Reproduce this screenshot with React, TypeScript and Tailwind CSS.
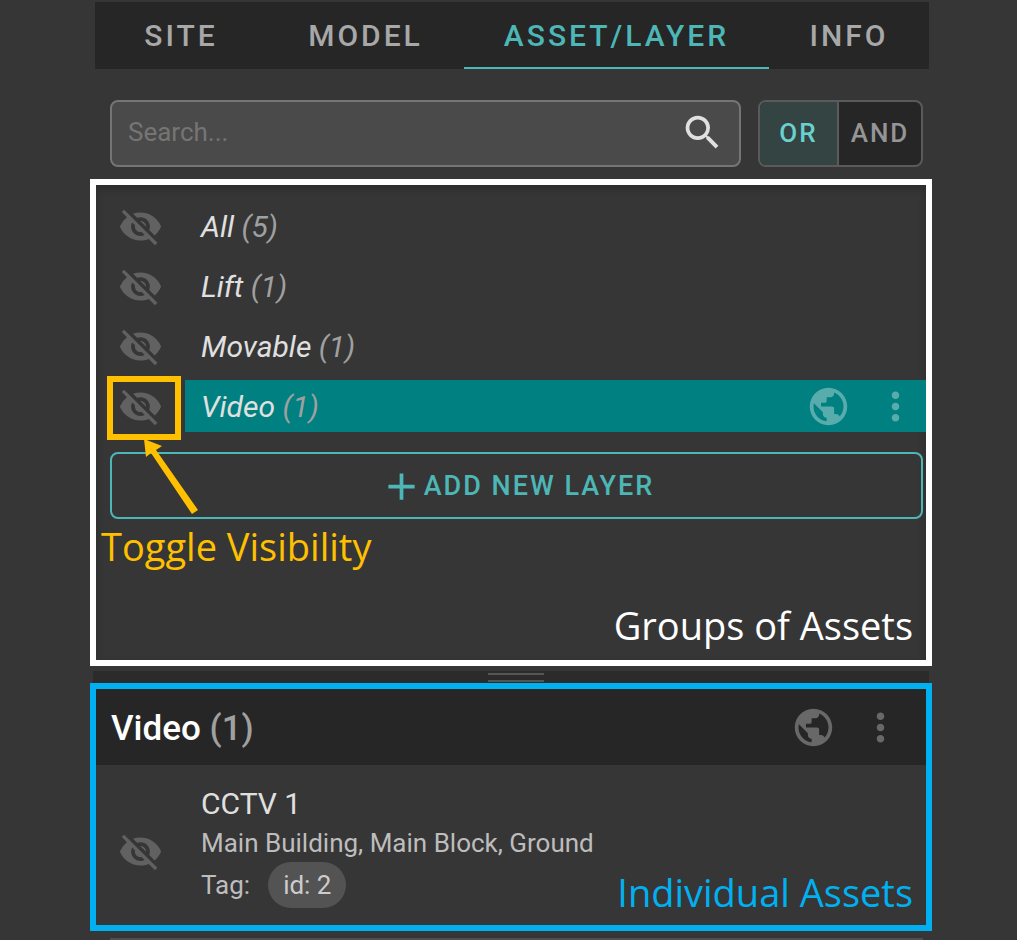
import { useState } from "react";
import {
  MdAdd,
  MdMoreVert,
  MdPublic,
  MdSearch,
  MdVisibilityOff,
} from "react-icons/md";

const tabs = ["SITE", "MODEL", "ASSET/LAYER", "INFO"];

const groups = [
  { name: "All", count: 5 },
  { name: "Lift", count: 1 },
  { name: "Movable", count: 1 },
  { name: "Video", count: 1 },
];

function VisibilityButton({ label }: { label: string }) {
  return (
    <button
      aria-label={`Toggle visibility of ${label}`}
      className="flex w-[89px] shrink-0 items-center justify-center text-[#616161]"
    >
      <MdVisibilityOff size={45} />
    </button>
  );
}

function RowActions({ className }: { className: string }) {
  return (
    <div className={`flex items-center gap-[22px] ${className}`}>
      <button aria-label="Show on map">
        <MdPublic size={45} />
      </button>
      <button aria-label="More options">
        <MdMoreVert size={45} />
      </button>
    </div>
  );
}

export default function App() {
  const [tab, setTab] = useState("ASSET/LAYER");
  const [mode, setMode] = useState("OR");
  const [selected, setSelected] = useState("Video");
  const [search, setSearch] = useState("");

  return (
    <div className="min-h-screen bg-[#363636] pt-0.5 pr-[85px] pl-[90px] font-['Roboto',sans-serif]">
      <div className="mr-[3px] ml-[5px]">
        <nav className="grid h-[67px] grid-cols-[172fr_197fr_305fr_160fr] bg-[#262626]">
          {tabs.map((t) => (
            <button
              key={t}
              onClick={() => setTab(t)}
              className={`border-b-2 pt-0.5 text-[30px] font-medium tracking-[3px] ${
                tab === t
                  ? "border-[#4db6b6] text-[#4db6b6]"
                  : "border-transparent text-[#a8a8a8]"
              }`}
            >
              {t}
            </button>
          ))}
        </nav>
        <div className="mt-[31px] mr-1.5 ml-[15px] flex h-[67px] gap-[17px]">
          <div className="flex min-w-0 flex-1 items-center rounded-lg border-2 border-[#757575] bg-[#4a4a4a] pr-3.5 pb-0.5 pl-4">
            <input
              aria-label="Search"
              value={search}
              onChange={(e) => setSearch(e.target.value)}
              placeholder="Search..."
              className="min-w-0 flex-1 bg-transparent text-[26px] text-[#e0e0e0] outline-none placeholder:text-[#757575]"
            />
            <button aria-label="Run search" className="text-[#e0e0e0]">
              <MdSearch size={45} />
            </button>
          </div>
          <div className="grid w-[165px] grid-cols-[79fr_82fr] overflow-hidden rounded-lg border-2 border-[#5a5a5a] bg-[#262626]">
            {["OR", "AND"].map((m) => (
              <button
                key={m}
                onClick={() => setMode(m)}
                className={`border-[#5a5a5a] text-[26px] font-medium tracking-[2px] first:border-r-2 ${
                  mode === m
                    ? "bg-[#334443] text-[#6bd0d0]"
                    : "text-[#959595]"
                }`}
              >
                {m}
              </button>
            ))}
          </div>
        </div>
      </div>

      <section className="relative mt-3 border-6 border-white pt-[15px] pb-2 shadow-[inset_0_4px_8px_rgba(0,0,0,0.2)]">
        <ul className="flex flex-col gap-2">
          {groups.map((g) => (
            <li key={g.name} className="flex h-13">
              <VisibilityButton label={g.name} />
              <div
                className={`flex min-w-0 flex-1 items-center pr-2 ${
                  selected === g.name ? "bg-[#008080]" : ""
                }`}
              >
                <button
                  onClick={() => setSelected(g.name)}
                  className="flex-1 pl-4 text-left text-[30px] italic text-[#e0e0e0]"
                >
                  {g.name} <span className="text-[#a0a0a0]">({g.count})</span>
                </button>
                {selected === g.name && (
                  <RowActions className="text-[#59acac]" />
                )}
              </div>
            </li>
          ))}
        </ul>
        <button className="mt-5 mr-[3px] ml-3.5 flex h-[67px] w-[calc(100%-17px)] items-center justify-center rounded-lg border-2 border-[#4db6b6] pt-0.5 text-[27px] font-medium tracking-[2px] text-[#4db6b6]">
          <MdAdd size={45} />
          ADD NEW LAYER
        </button>
        <p className="pl-[5px] font-['Open_Sans',sans-serif] text-[38px] leading-[54px] text-[#ffc000]">
          Toggle Visibility
        </p>
        <p className="mt-[25px] pr-[13px] text-right font-['Open_Sans',sans-serif] text-[38px] leading-[54px] text-white">
          Groups of Assets
        </p>

        {/* callout around the last toggle */}
        <div className="pointer-events-none absolute top-[191px] left-[11px] h-16 w-[74px] border-6 border-[#ffc000]" />
        <svg
          className="pointer-events-none absolute top-[254px] left-12"
          width="56"
          height="76"
          fill="#ffc000"
        >
          <path d="M0 0 L18 7 L12 11 L54 71 L48 75 L7 14 L2 18 Z" />
        </svg>
      </section>

      <div className="mt-[5px] mr-[3px] ml-[3px] flex h-3 flex-col items-center bg-[#2b2b2b] pt-0.5 pl-2.5">
        <div className="h-[9px] w-14 border-y-2 border-[#555555]" />
      </div>

      <section className="border-6 border-[#00b0f0]">
        <header className="flex h-19 items-center justify-between bg-[#262626] pr-[23px] pl-[15px]">
          <h2 className="pt-1 text-[35px] font-medium text-white">
            Video <span className="text-[#a0a0a0]">(1)</span>
          </h2>
          <RowActions className="text-[#686868]" />
        </header>
        <div className="relative flex pt-[19px] pb-[17px]">
          <div className="flex items-end pb-[34px]">
            <VisibilityButton label="CCTV 1" />
          </div>
          <div className="pl-4 text-[26px] text-[#bdbdbd]">
            <h3 className="text-[30px] leading-10 text-[#e0e0e0]">CCTV 1</h3>
            <p className="leading-[38px]">Main Building, Main Block, Ground</p>
            <div className="flex items-center gap-[18px]">
              Tag:
              <span className="h-[46px] rounded-full bg-[#535353] px-[15px] leading-[46px] text-[#cccccc]">
                id: 2
              </span>
            </div>
          </div>
          <p className="absolute right-[13px] bottom-1.5 font-['Open_Sans',sans-serif] text-[38px] leading-[54px] text-[#00b0f0]">
            Individual Assets
          </p>
        </div>
      </section>

      <div className="mt-[7px] mr-[9px] ml-5 h-0.5 bg-[#4f4f4f]" />
    </div>
  );
}
